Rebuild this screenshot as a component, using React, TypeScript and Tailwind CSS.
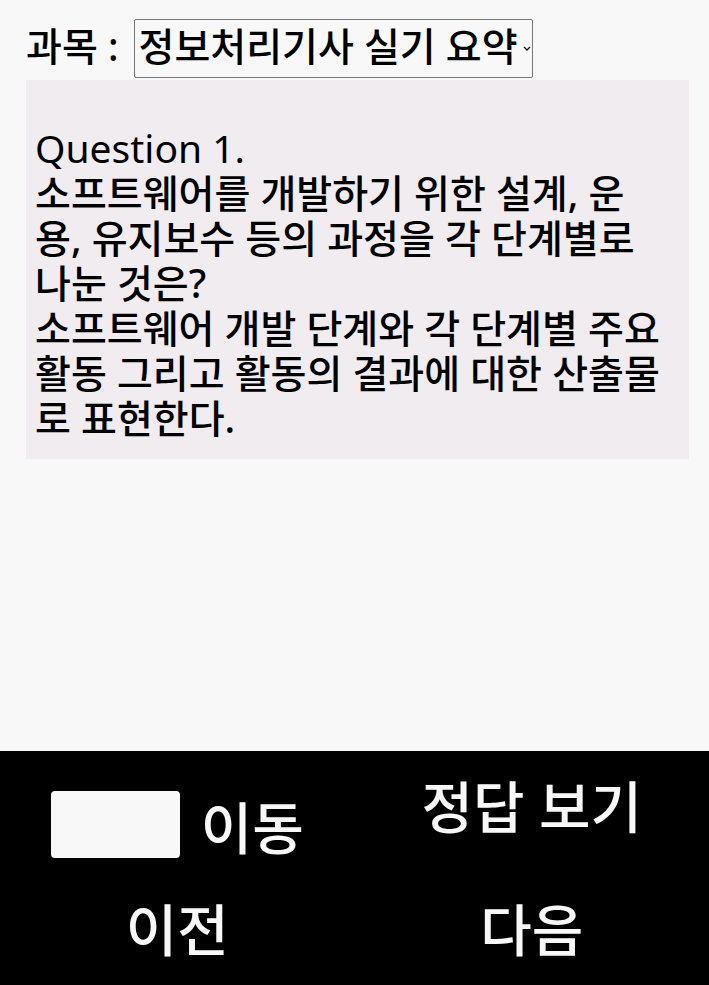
import React from 'react'

const fontStack = "font-['Noto_Sans','Noto_Sans_CJK_KR',sans-serif]"

export default function App() {
  return (
    <div className={`flex h-[985px] flex-col bg-[#f8f8f8] text-black ${fontStack}`}>
      {/* subject picker */}
      <div className="flex items-start gap-[15px] pl-[26px] pt-[19px] font-medium">
        <span className="mt-[4px] text-[39px] leading-[45px]">과목 :</span>
        <div className="relative h-[59px] w-[399px] overflow-hidden rounded-[2px] border border-[#767676] pl-[4px] pt-[3px]">
          <div className="whitespace-nowrap text-[39px] leading-[45px]">정보처리기사 실기 요약</div>
          <svg
            viewBox="0 0 8 5"
            className="absolute right-[1px] top-[26px] h-[5px] w-[8px]"
            fill="none"
            stroke="#111"
            strokeWidth="1.3"
          >
            <path d="M1 1l3 3 3-3" />
          </svg>
        </div>
      </div>

      {/* question card */}
      <div className="ml-[26px] mt-[2px] w-[663px] bg-[#f0ecf0] pb-[19px] pl-[9px] pr-[24px] pt-[45px] text-[39px] font-medium leading-[45px]">
        <span className="font-normal">Question 1.</span>
        <br />
        소프트웨어를 개발하기 위한 설계, 운용, 유지보수 등의 과정을 각 단계별로 나눈 것은?
        <br />
        소프트웨어 개발 단계와 각 단계별 주요 활동 그리고 활동의 결과에 대한 산출물로 표현한다.
      </div>

      {/* controls */}
      <div className="mt-auto grid h-[234px] grid-cols-2 grid-rows-2 bg-black text-[56px] font-medium leading-[60px] text-[#f8f8f8]">
        <div className="flex items-start justify-center gap-[21px]">
          <input type="text" className="mt-[40px] h-[67px] w-[129px] rounded-[4px] bg-[#f8f8f8] outline-none" />
          <span className="mt-[46px]">이동</span>
        </div>
        <button className="flex items-center justify-center pb-[8px]">정답 보기</button>
        <button className="flex items-center justify-center pt-[4px]">이전</button>
        <button className="flex items-center justify-center pt-[4px]">다음</button>
      </div>
    </div>
  )
}
